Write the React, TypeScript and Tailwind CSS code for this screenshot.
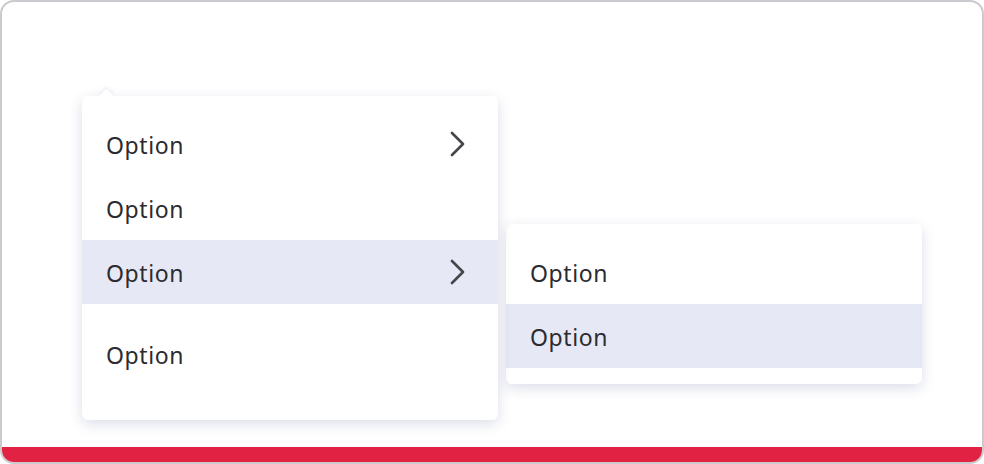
import React from "react";

const Chevron = () => (
  <svg width="16" height="26" viewBox="0 0 16 26" fill="none">
    <path d="M2 2 L13 13 L2 24" stroke="#45454c" strokeWidth="2.7" strokeLinecap="round" strokeLinejoin="round" />
  </svg>
);

const Row = ({ label, active, sub }: { label: string; active?: boolean; sub?: boolean }) => (
  <div
    className={`h-16 flex items-center justify-between pl-6 pr-[32px] ${active ? "bg-[#e6e8f6]" : ""}`}
  >
    <span className="text-[23px] leading-none pt-[2px] text-[#2b2b30] tracking-[0.6px]">{label}</span>
    {sub && <Chevron />}
  </div>
);

export default function App() {
  return (
    <div
      className="w-[984px] h-[464px] bg-white border-2 border-[#cbcbcf] rounded-[14px] overflow-hidden flex flex-col"
      style={{ fontFamily: '"Noto Sans", "Open Sans", sans-serif' }}
    >
      <div className="flex-1 flex items-start pl-[80px] pt-[94px] gap-2">
        <div className="relative w-[416px] bg-white rounded-[6px] shadow-[0_4px_14px_rgba(40,50,110,0.16)] pt-4 pb-[34px]">
          <div className="absolute left-[19px] -top-[5px] w-[11px] h-[11px] bg-white rotate-45 rounded-tl-[3px] shadow-[-2px_-2px_4px_rgba(40,50,110,0.06)]" />
          <div className="relative">
            <Row label="Option" sub />
            <Row label="Option" />
            <Row label="Option" active sub />
            <div className="mt-[18px]">
              <Row label="Option" />
            </div>
          </div>
        </div>
        <div className="w-[416px] mt-[128px] bg-white rounded-[6px] shadow-[0_4px_14px_rgba(40,50,110,0.16)] py-4">
          <Row label="Option" />
          <Row label="Option" active />
        </div>
      </div>
      <div className="h-[15px] bg-[#e12242]" />
    </div>
  );
}
